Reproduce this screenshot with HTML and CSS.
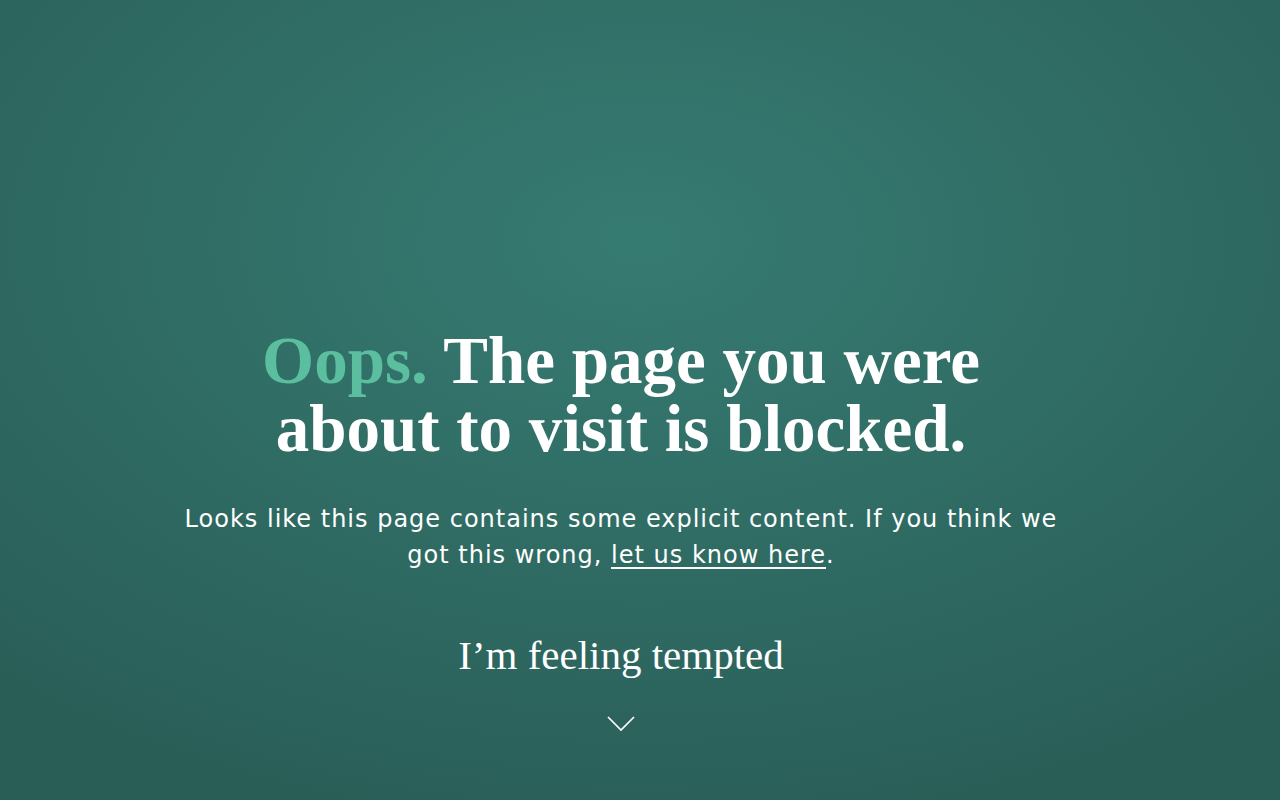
FILE: index.html
```html
<!DOCTYPE html>
<html>
<head>
<meta charset="utf-8">
<link rel="stylesheet" href="styles.css">
</head>
<body>
<main class="page">
  <section class="content">
    <h1 class="title"><span class="oops">Oops.</span> The page you were about to visit is blocked.</h1>
    <p class="lead">Looks like this page contains some explicit content. If you think we got this wrong, <a class="link" href="#">let us know here</a>.</p>
    <a class="tempt" href="#">I’m feeling tempted</a>
    <svg class="chevron" width="28" height="16" viewBox="0 0 28 16" aria-hidden="true">
      <path d="M1 1 L14 14 L27 1" fill="none" stroke="#ffffff" stroke-width="1.7"/>
    </svg>
  </section>
</main>
</body>
</html>
```

FILE: styles.css
```css
html, body {
  margin: 0;
  padding: 0;
  height: 100%;
}
body {
  background: radial-gradient(ellipse 75% 75% at 50% 30%, #367b72 0%, #2f6b63 55%, #295e57 100%);
  color: #ffffff;
  font-family: "DejaVu Sans", "Liberation Sans", sans-serif;
}
.page {
  height: 800px;
  display: flex;
  justify-content: center;
  padding-right: 38px;
}
.content {
  width: 900px;
  padding-top: 326px;
  display: flex;
  flex-direction: column;
  align-items: center;
  text-align: center;
}
.title {
  margin: 0;
  font-family: "Liberation Serif", "Times New Roman", serif;
  font-weight: 700;
  font-size: 67px;
  line-height: 68px;
  width: 760px;
}
.oops {
  color: #5bbf9f;
}
.lead {
  margin: 39px 0 0;
  font-size: 24px;
  line-height: 36px;
  letter-spacing: 1px;
  font-weight: 400;
}
.link {
  color: #ffffff;
  text-decoration: underline;
  text-underline-offset: 4px;
  text-decoration-thickness: 1.5px;
}
.tempt {
  margin-top: 58px;
  font-family: "Liberation Serif", "Times New Roman", serif;
  font-size: 41px;
  line-height: 48px;
  color: #ffffff;
  text-decoration: none;
}
.chevron {
  margin-top: 37px;
}
```
